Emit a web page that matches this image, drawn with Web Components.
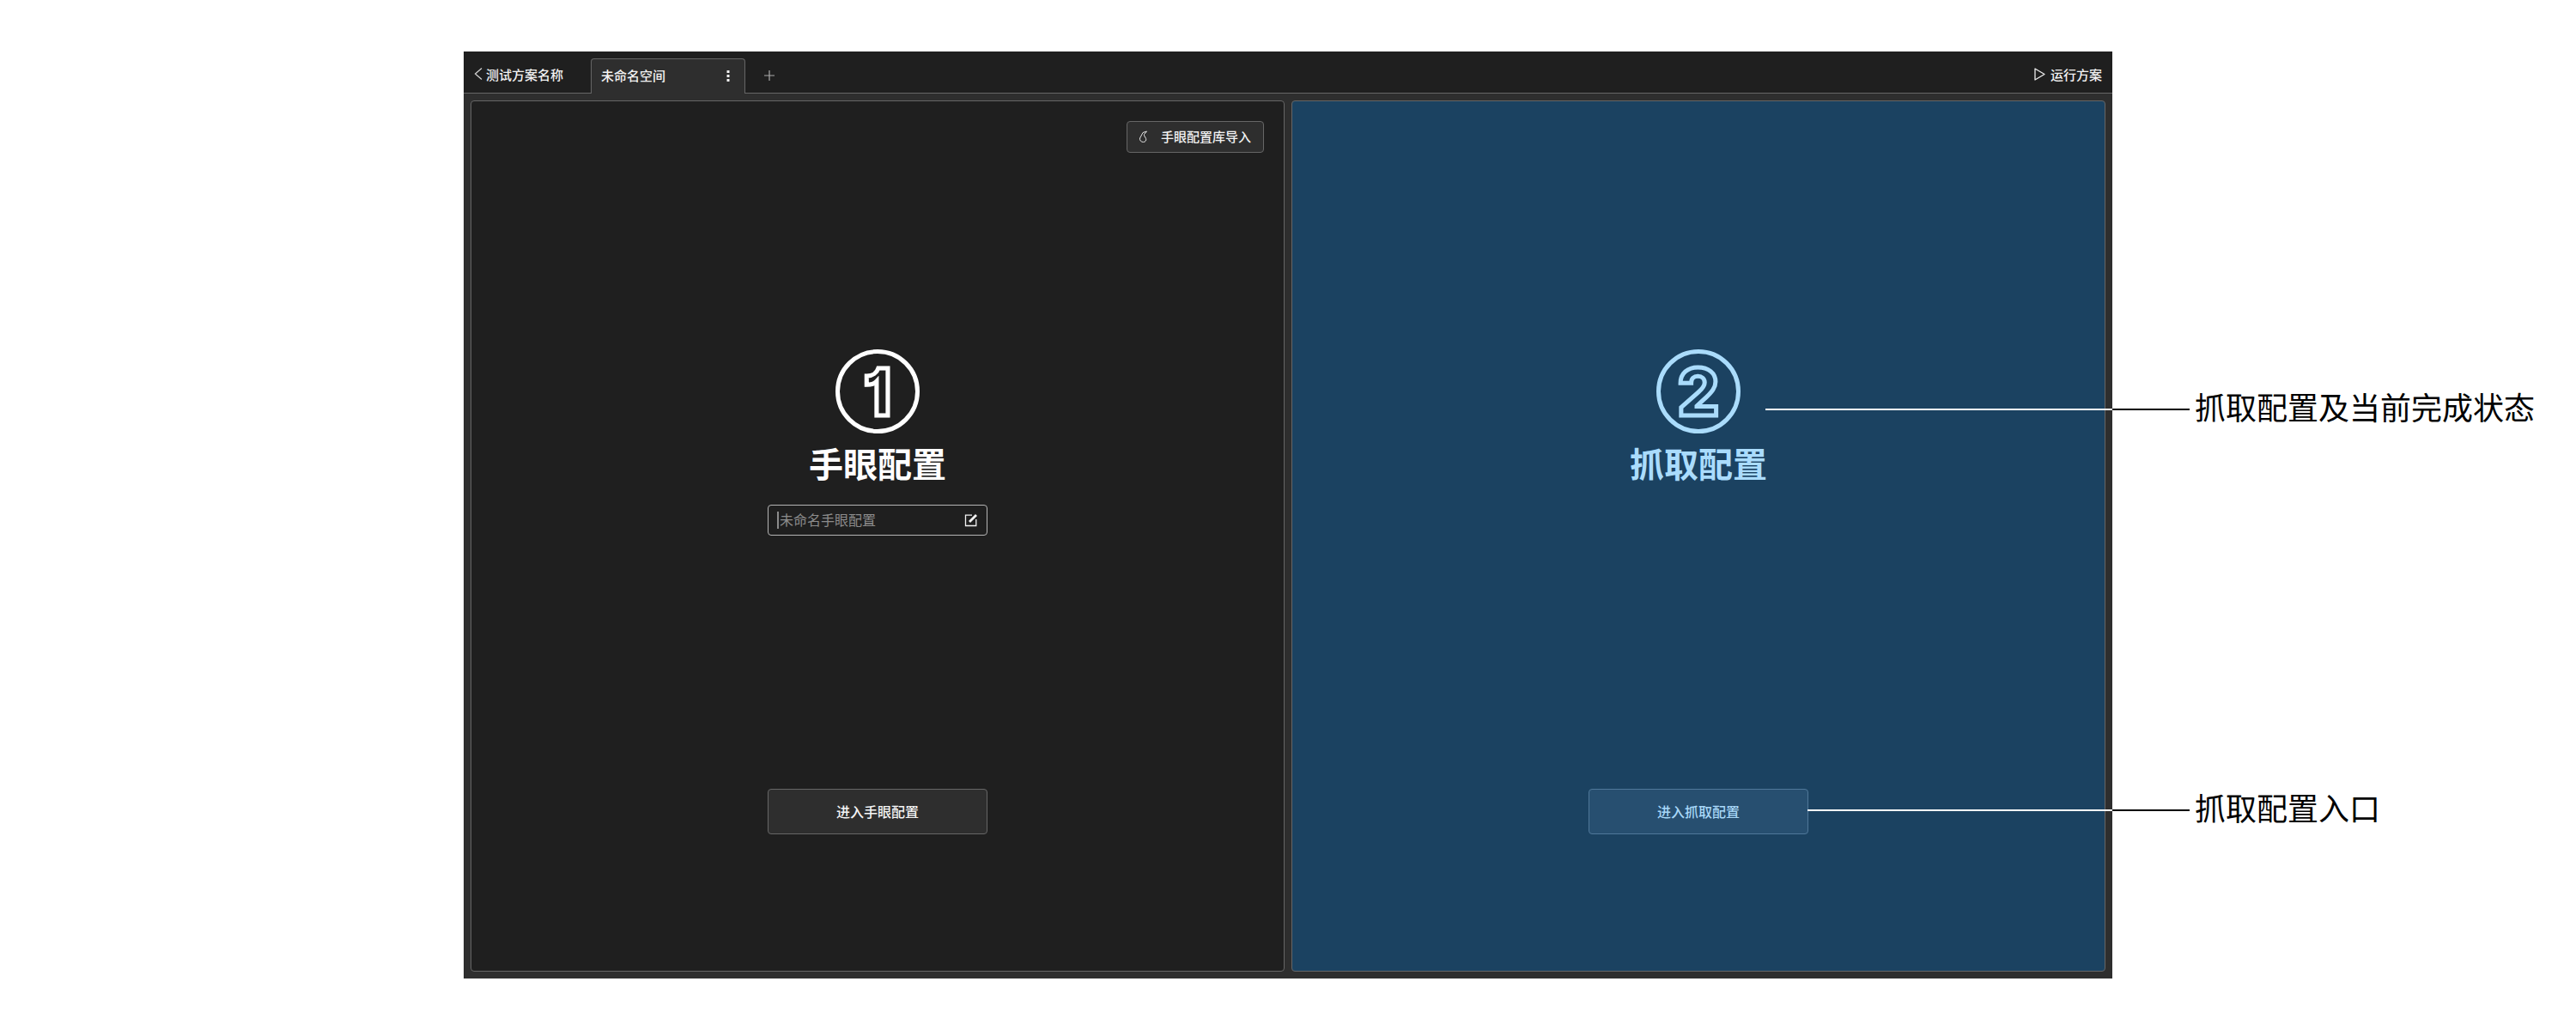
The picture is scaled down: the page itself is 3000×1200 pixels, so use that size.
<!DOCTYPE html>
<html lang="zh">
<head>
<meta charset="utf-8">
<title>抓取配置</title>
<style>
  html, body { margin: 0; background: #fff; }
  body { font-family: "Noto Sans CJK SC", "Liberation Sans", sans-serif; }
</style>
</head>
<body>
<app-stage>
  <tab-bar>
    <back-link slot="left">测试方案名称</back-link>
    <tab-item slot="left">未命名空间</tab-item>
    <add-tab slot="left"></add-tab>
    <run-button slot="right">运行方案</run-button>
  </tab-bar>
  <config-panel num="1" heading="手眼配置" action="进入手眼配置">
    <import-button slot="top">手眼配置库导入</import-button>
    <name-input placeholder="未命名手眼配置"></name-input>
  </config-panel>
  <config-panel num="2" heading="抓取配置" action="进入抓取配置" tone="blue"></config-panel>
  <call-out slot="notes" start="2056" y="476" end="2550">抓取配置及当前完成状态</call-out>
  <call-out slot="notes" start="2105" y="943" end="2550">抓取配置入口</call-out>
</app-stage>

<script>
class AppStage extends HTMLElement {
  constructor() {
    super();
    this.attachShadow({mode: "open"}).innerHTML = `
      <style>
        :host { display: block; position: relative; width: 3000px; height: 1200px; padding: 60px 0 0 540px; box-sizing: border-box; }
        #frame { width: 1920px; height: 1080px; background: #2e2e2e; display: flex; flex-direction: column; }
        #panels { flex: 1; min-height: 0; display: flex; gap: 8px; padding: 8px; }
      </style>
      <div id="frame">
        <slot name="bar"></slot>
        <div id="panels"><slot></slot></div>
      </div>
      <slot name="notes"></slot>`;
  }
  connectedCallback() {
    this.querySelector("tab-bar").slot = "bar";
  }
}

class TabBar extends HTMLElement {
  constructor() {
    super();
    this.attachShadow({mode: "open"}).innerHTML = `
      <style>
        :host { display: flex; height: 49px; box-sizing: border-box; background: #1f1f1f; border-bottom: 1px solid #666; justify-content: space-between; color: #f2f2f2; font-size: 15px; font-weight: 500; }
        div { display: flex; align-items: flex-end; }
      </style>
      <div><slot name="left"></slot></div>
      <div><slot name="right"></slot></div>`;
  }
}

class BackLink extends HTMLElement {
  constructor() {
    super();
    this.attachShadow({mode: "open"}).innerHTML = `
      <style>
        :host { display: flex; align-items: center; align-self: stretch; width: 148px; box-sizing: border-box; padding: 4px 0 0 12px; gap: 2px; }
        svg { width: 12px; height: 16px; fill: none; stroke: #d0d0d0; stroke-width: 1.3; }
      </style>
      <svg viewBox="0 0 12 16"><path d="M9 1.500 1.500 8 9 14.500"/></svg><slot></slot>`;
  }
}

class TabItem extends HTMLElement {
  constructor() {
    super();
    this.attachShadow({mode: "open"}).innerHTML = `
      <style>
        :host { display: flex; align-items: center; justify-content: space-between; width: 180px; height: 41px; box-sizing: border-box; margin-bottom: -1px; padding: 0 16px 3px 11px; background: #2e2e2e; border: 1px solid #666; border-bottom: none; border-radius: 4px 4px 0 0; }
        svg { width: 6px; height: 16px; fill: #f2f2f2; }
      </style>
      <slot></slot>
      <svg viewBox="0 0 6 16"><rect x="1.500" y="2" width="3" height="3"/><rect x="1.500" y="7" width="3" height="3"/><rect x="1.500" y="12" width="3" height="3"/></svg>`;
  }
}

class AddTab extends HTMLElement {
  constructor() {
    super();
    this.attachShadow({mode: "open"}).innerHTML = `
      <style>
        :host { display: flex; align-items: center; align-self: stretch; padding: 8px 0 0 21px; }
        svg { width: 14px; height: 14px; stroke: #aaa; stroke-width: 1.2; fill: none; }
      </style>
      <svg viewBox="0 0 14 14"><path d="M7 1v12M1 7h12"/></svg>`;
  }
}

class RunButton extends HTMLElement {
  constructor() {
    super();
    this.attachShadow({mode: "open"}).innerHTML = `
      <style>
        :host { display: flex; align-items: center; align-self: stretch; gap: 6px; padding: 4px 12px 0 0; }
        svg { width: 13px; height: 15px; fill: none; stroke: #ececec; stroke-width: 1.3; stroke-linejoin: round; }
      </style>
      <svg viewBox="0 0 13 15"><path d="M1 1v13L12 7.500z"/></svg><slot></slot>`;
  }
}

class ImportButton extends HTMLElement {
  constructor() {
    super();
    this.attachShadow({mode: "open"}).innerHTML = `
      <style>
        :host { display: flex; align-items: center; width: 160px; height: 37px; box-sizing: border-box; padding: 0 0 2px 13px; gap: 15px; background: #2e2e2e; border: 1px solid #666; border-radius: 4px; color: #f2f2f2; font-size: 15px; font-weight: 500; }
        svg { width: 11px; height: 15px; fill: none; stroke: #e4e4e4; stroke-width: 1; margin-top: 2px; }
      </style>
      <svg viewBox="0 0 11 15"><path d="M9.500 1 5 2.500 1.500 9c-.5 2.500 1.500 4.500 4 4.500 2.500 0 3.800-2.200 3-4.200C7.800 7.500 6 6.500 6.500 4.500L9.500 1z"/></svg><slot></slot>`;
  }
}

class NameInput extends HTMLElement {
  constructor() {
    super();
    const root = this.attachShadow({mode: "open"});
    root.innerHTML = `
      <style>
        :host { display: flex; align-items: center; width: 256px; height: 36px; box-sizing: border-box; margin-top: 25px; padding: 0 10px; border: 1px solid #b5b5b5; border-radius: 4px; font-size: 16px; color: #8c8c8c; }
        i { width: 2px; height: 20px; background: #8c8c8c; margin-right: 1px; }
        span { flex: 1; margin-bottom: 2px; }
        svg { width: 16px; height: 16px; fill: none; stroke: #f2f2f2; stroke-width: 1.3; }
      </style>
      <i></i><span></span>
      <svg viewBox="0 0 16 16"><path d="M9 2.200H1.500v12.300h12.300V7"/><path d="M6 10 14 2" stroke-width="2.800"/></svg>`;
    root.querySelector("span").textContent = this.getAttribute("placeholder");
  }
}

const panelTemplate = document.createElement("template");
panelTemplate.innerHTML = `
  <style>
    :host { --ink: #ffffff; --fill: #1f1f1f; --btn: #2e2e2e; --btn-line: #666; --btn-ink: #f5f5f5;
      flex: 1; min-width: 0; display: flex; flex-direction: column; align-items: center; box-sizing: border-box; padding: 23px 23px 159px; background: var(--fill); border: 1px solid #666; border-radius: 4px; position: relative; }
    :host([tone="blue"]) { --ink: #aadcfc; --fill: #1b4261; --btn: #274f70; --btn-line: #4f7899; --btn-ink: #a8d8f8; }
    #top { align-self: stretch; height: 37px; display: flex; justify-content: flex-end; }
    #badge { margin-top: 229px; width: 98px; height: 98px; box-sizing: border-box; border: 5px solid var(--ink); border-radius: 50%; display: flex; align-items: center; justify-content: center; }
    #badge span { font: 800 76px/1 Inter, "Liberation Sans", sans-serif; font-feature-settings: "cv01"; color: var(--fill); -webkit-text-stroke: 5px var(--ink); }
    h2 { margin: 10px 0 0; font: 700 40px/48px "Noto Sans CJK SC", sans-serif; color: var(--ink); }
    #action { margin-top: auto; width: 256px; height: 53px; box-sizing: border-box; padding-bottom: 2px; display: flex; align-items: center; justify-content: center; background: var(--btn); border: 1px solid var(--btn-line); border-radius: 4px; color: var(--btn-ink); font-size: 16px; font-weight: 500; }
  </style>
  <div id="top"><slot name="top"></slot></div>
  <div id="badge"><span></span></div>
  <h2></h2>
  <slot></slot>
  <div id="action"></div>`;

class ConfigPanel extends HTMLElement {
  constructor() {
    super();
    const root = this.attachShadow({mode: "open"});
    root.appendChild(panelTemplate.content.cloneNode(true));
    root.querySelector("#badge span").textContent = this.getAttribute("num");
    root.querySelector("h2").textContent = this.getAttribute("heading");
    root.querySelector("#action").textContent = this.getAttribute("action");
  }
}

class CallOut extends HTMLElement {
  constructor() {
    super();
    this.attachShadow({mode: "open"}).innerHTML = `
      <style>
        :host { position: absolute; display: flex; align-items: center; height: 2px; color: #000; font-size: 36px; line-height: 1; white-space: nowrap; }
        #line { height: 2px; }
        #text { margin: 0 0 9px 6px; }
      </style>
      <div id="line"></div><div id="text"><slot></slot></div>`;
  }
  connectedCallback() {
    const start = +this.getAttribute("start"), end = +this.getAttribute("end");
    this.style.left = start + "px";
    this.style.top = this.getAttribute("y") + "px";
    const line = this.shadowRoot.querySelector("#line");
    line.style.width = (end - start) + "px";
    const edge = 2460 - start;
    line.style.background = `linear-gradient(to right, #fff ${edge}px, #000 ${edge}px)`;
  }
}

customElements.define("app-stage", AppStage);
customElements.define("tab-bar", TabBar);
customElements.define("back-link", BackLink);
customElements.define("tab-item", TabItem);
customElements.define("add-tab", AddTab);
customElements.define("run-button", RunButton);
customElements.define("import-button", ImportButton);
customElements.define("name-input", NameInput);
customElements.define("config-panel", ConfigPanel);
customElements.define("call-out", CallOut);
</script>
</body>
</html>
